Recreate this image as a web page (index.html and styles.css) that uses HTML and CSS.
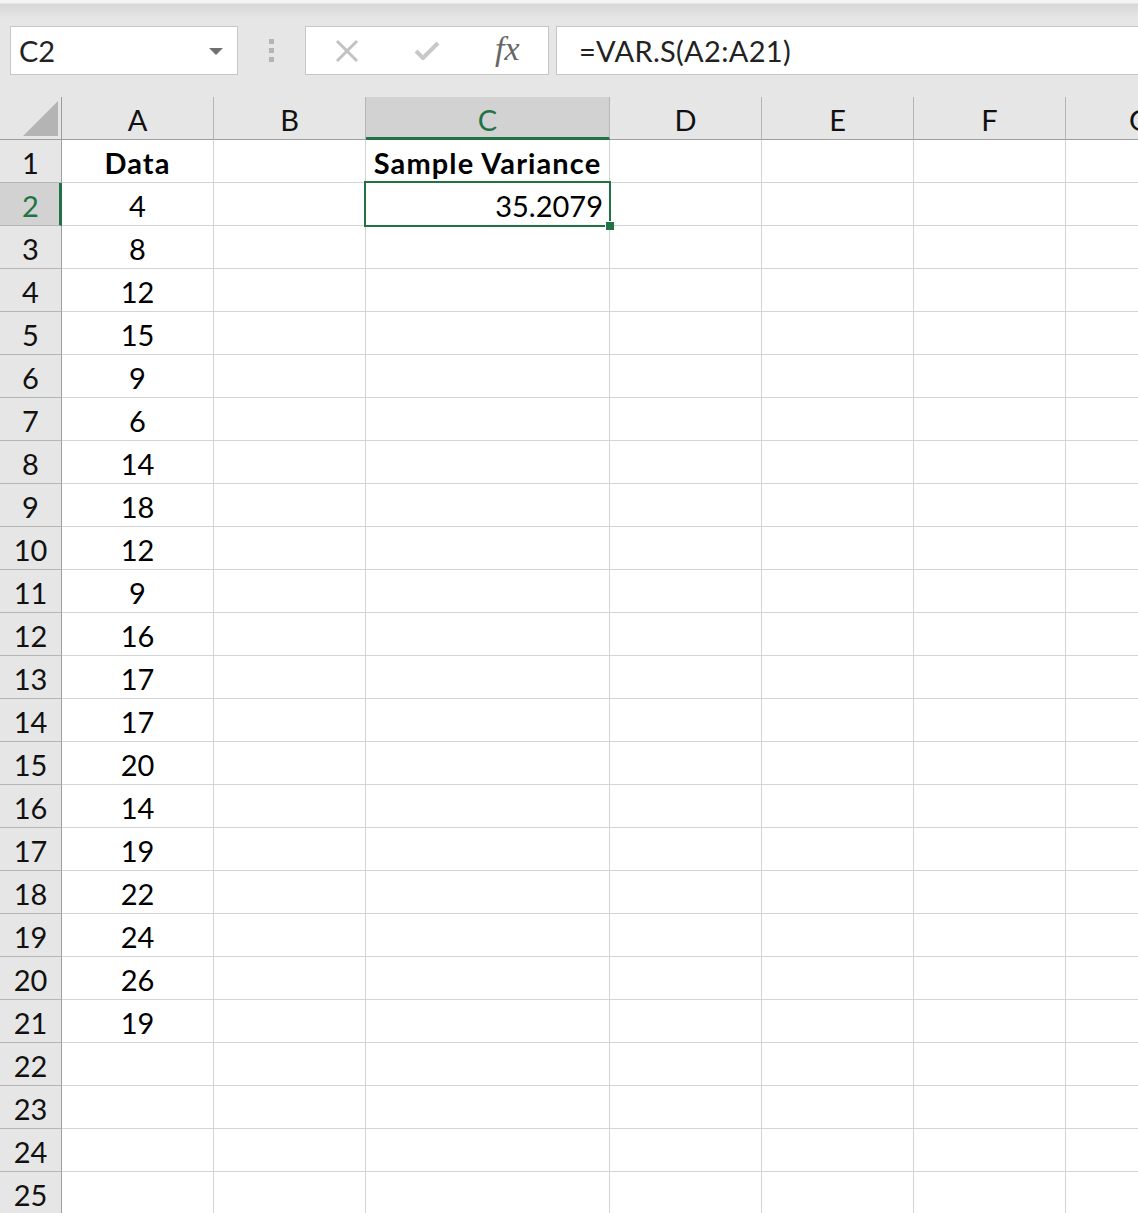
FILE: index.html
```html
<!DOCTYPE html>
<html>
<head>
<meta charset="utf-8">
<link rel="stylesheet" href="styles.css">
</head>
<body>
<div class="app">
  <div class="toolbar">
    <div class="namebox">
      <span class="name">C2</span>
      <svg class="caret" width="14" height="8" viewBox="0 0 14 8"><path d="M0 0 L14 0 L7 7 Z" fill="#707070"/></svg>
    </div>
    <div class="grip"><span></span><span></span><span></span></div>
    <div class="fxbox">
      <svg class="icon" width="24" height="24" viewBox="0 0 24 24"><path d="M2 2 L22 22 M22 2 L2 22" stroke="#c2c2c2" stroke-width="3" fill="none"/></svg>
      <svg class="icon" width="26" height="22" viewBox="0 0 26 22"><path d="M2 11 L9 18 L24 3" stroke="#c8c8c8" stroke-width="4" fill="none" stroke-linejoin="round"/></svg>
      <span class="fx">fx</span>
    </div>
    <div class="formula">=VAR.S(A2:A21)</div>
  </div>
  <div class="sheet">
    <div class="corner"><div class="tri"></div></div>
    <div class="ch">A</div><div class="ch">B</div><div class="ch sel">C</div><div class="ch">D</div><div class="ch">E</div><div class="ch">F</div><div class="ch chg">G</div>

    <div class="rh">1</div><div class="c ctr b">Data</div><div class="c"></div><div class="c ctr b">Sample Variance</div><div class="c"></div><div class="c"></div><div class="c"></div><div class="c"></div>
    <div class="rh sel">2</div><div class="c ctr">4</div><div class="c"></div><div class="c rt active">35.2079<div class="selbox"></div><div class="handle"></div></div><div class="c"></div><div class="c"></div><div class="c"></div><div class="c"></div>
    <div class="rh">3</div><div class="c ctr">8</div><div class="c"></div><div class="c"></div><div class="c"></div><div class="c"></div><div class="c"></div><div class="c"></div>
    <div class="rh">4</div><div class="c ctr">12</div><div class="c"></div><div class="c"></div><div class="c"></div><div class="c"></div><div class="c"></div><div class="c"></div>
    <div class="rh">5</div><div class="c ctr">15</div><div class="c"></div><div class="c"></div><div class="c"></div><div class="c"></div><div class="c"></div><div class="c"></div>
    <div class="rh">6</div><div class="c ctr">9</div><div class="c"></div><div class="c"></div><div class="c"></div><div class="c"></div><div class="c"></div><div class="c"></div>
    <div class="rh">7</div><div class="c ctr">6</div><div class="c"></div><div class="c"></div><div class="c"></div><div class="c"></div><div class="c"></div><div class="c"></div>
    <div class="rh">8</div><div class="c ctr">14</div><div class="c"></div><div class="c"></div><div class="c"></div><div class="c"></div><div class="c"></div><div class="c"></div>
    <div class="rh">9</div><div class="c ctr">18</div><div class="c"></div><div class="c"></div><div class="c"></div><div class="c"></div><div class="c"></div><div class="c"></div>
    <div class="rh">10</div><div class="c ctr">12</div><div class="c"></div><div class="c"></div><div class="c"></div><div class="c"></div><div class="c"></div><div class="c"></div>
    <div class="rh">11</div><div class="c ctr">9</div><div class="c"></div><div class="c"></div><div class="c"></div><div class="c"></div><div class="c"></div><div class="c"></div>
    <div class="rh">12</div><div class="c ctr">16</div><div class="c"></div><div class="c"></div><div class="c"></div><div class="c"></div><div class="c"></div><div class="c"></div>
    <div class="rh">13</div><div class="c ctr">17</div><div class="c"></div><div class="c"></div><div class="c"></div><div class="c"></div><div class="c"></div><div class="c"></div>
    <div class="rh">14</div><div class="c ctr">17</div><div class="c"></div><div class="c"></div><div class="c"></div><div class="c"></div><div class="c"></div><div class="c"></div>
    <div class="rh">15</div><div class="c ctr">20</div><div class="c"></div><div class="c"></div><div class="c"></div><div class="c"></div><div class="c"></div><div class="c"></div>
    <div class="rh">16</div><div class="c ctr">14</div><div class="c"></div><div class="c"></div><div class="c"></div><div class="c"></div><div class="c"></div><div class="c"></div>
    <div class="rh">17</div><div class="c ctr">19</div><div class="c"></div><div class="c"></div><div class="c"></div><div class="c"></div><div class="c"></div><div class="c"></div>
    <div class="rh">18</div><div class="c ctr">22</div><div class="c"></div><div class="c"></div><div class="c"></div><div class="c"></div><div class="c"></div><div class="c"></div>
    <div class="rh">19</div><div class="c ctr">24</div><div class="c"></div><div class="c"></div><div class="c"></div><div class="c"></div><div class="c"></div><div class="c"></div>
    <div class="rh">20</div><div class="c ctr">26</div><div class="c"></div><div class="c"></div><div class="c"></div><div class="c"></div><div class="c"></div><div class="c"></div>
    <div class="rh">21</div><div class="c ctr">19</div><div class="c"></div><div class="c"></div><div class="c"></div><div class="c"></div><div class="c"></div><div class="c"></div>
    <div class="rh">22</div><div class="c"></div><div class="c"></div><div class="c"></div><div class="c"></div><div class="c"></div><div class="c"></div><div class="c"></div>
    <div class="rh">23</div><div class="c"></div><div class="c"></div><div class="c"></div><div class="c"></div><div class="c"></div><div class="c"></div><div class="c"></div>
    <div class="rh">24</div><div class="c"></div><div class="c"></div><div class="c"></div><div class="c"></div><div class="c"></div><div class="c"></div><div class="c"></div>
    <div class="rh">25</div><div class="c"></div><div class="c"></div><div class="c"></div><div class="c"></div><div class="c"></div><div class="c"></div><div class="c"></div>
  </div>
</div>
</body>
</html>
```
FILE: styles.css
```css
html, body {
  margin: 0;
  padding: 0;
}
body {
  background: #e6e6e6;
  font-family: Lato, "Liberation Sans", sans-serif;
  color: #000;
  width: 1138px;
  height: 1213px;
  overflow: hidden;
}
.app {
  display: flex;
  flex-direction: column;
}
.toolbar {
  height: 97px;
  box-sizing: border-box;
  padding: 26px 0 0 10px;
  display: flex;
  align-items: flex-start;
  background: linear-gradient(#f4f4f4 0, #f4f4f4 3px, #d7d7d7 4px, #e6e6e6 18px);
}
.namebox {
  width: 228px;
  height: 49px;
  box-sizing: border-box;
  background: #fff;
  border: 1px solid #c6c6c6;
  display: flex;
  align-items: center;
  justify-content: space-between;
  padding: 0 14px 0 8px;
}
.name {
  font-size: 29px;
  color: #222;
}
.caret {
  margin-top: 2px;
}
.grip {
  width: 5px;
  margin: 13px 31px 0 31px;
  display: flex;
  flex-direction: column;
  gap: 4px;
}
.grip span {
  width: 5px;
  height: 5px;
  background: #b4b4b4;
}
.fxbox {
  width: 244px;
  height: 49px;
  box-sizing: border-box;
  background: #fff;
  border: 1px solid #c6c6c6;
  display: flex;
  align-items: center;
  padding: 0 0 0 29px;
}
.fxbox .icon:first-child {
  margin-right: 55px;
}
.fxbox .icon:nth-child(2) {
  margin-right: 55px;
}
.fx {
  font-family: "Liberation Serif", serif;
  font-style: italic;
  font-size: 34px;
  color: #666;
  margin-top: -4px;
}
.formula {
  flex: 1;
  margin-left: 7px;
  margin-right: -4px;
  height: 49px;
  box-sizing: border-box;
  background: #fff;
  border: 1px solid #c6c6c6;
  display: flex;
  align-items: center;
  padding-left: 22px;
  font-size: 29px;
  letter-spacing: 0.3px;
  color: #222;
}
.sheet {
  display: grid;
  grid-template-columns: 62px 152px 152px 244px 152px 152px 152px 1fr;
  grid-auto-rows: 43px;
}
.sheet > div {
  box-sizing: border-box;
  font-size: 29px;
  display: flex;
  align-items: center;
  padding-top: 2px;
}
.corner {
  background: #e6e6e6;
  border-right: 1px solid #9e9e9e;
  border-bottom: 1px solid #9e9e9e;
  position: relative;
}
.tri {
  position: absolute;
  left: 23px;
  top: 4px;
  width: 35px;
  height: 35px;
  background: #b4b4b4;
  clip-path: polygon(100% 0, 100% 100%, 0 100%);
}
.ch {
  background: #e6e6e6;
  border-right: 1px solid #b5b5b5;
  border-bottom: 1px solid #9e9e9e;
  justify-content: center;
  color: #111;
}
.chg {
  justify-content: flex-start;
  padding-left: 63px;
}
.ch.sel {
  background: #d2d2d2;
  color: #217346;
  border-bottom: 3px solid #217346;
  padding-top: 4px;
}
.rh {
  background: #e6e6e6;
  border-right: 1px solid #9e9e9e;
  border-bottom: 1px solid #b5b5b5;
  justify-content: center;
  color: #111;
}
.rh.sel {
  background: #d2d2d2;
  color: #217346;
  border-right: 3px solid #217346;
  padding-left: 2px;
}
.c {
  background: #fff;
  border-right: 1px solid #d4d4d4;
  border-bottom: 1px solid #d4d4d4;
}
.ctr {
  justify-content: center;
}
.rt {
  justify-content: flex-end;
  padding-right: 6px;
}
.b {
  font-weight: 700;
  letter-spacing: 1.1px;
}
.active {
  position: relative;
}
.selbox {
  position: absolute;
  left: -2px;
  top: -2px;
  right: -2px;
  bottom: -2px;
  border: 2px solid #217346;
  pointer-events: none;
}
.handle {
  position: absolute;
  right: -5px;
  bottom: -5px;
  width: 8px;
  height: 8px;
  background: #217346;
  border: 1px solid #fff;
  border-right: none;
  border-bottom: none;
  z-index: 2;
}
```
